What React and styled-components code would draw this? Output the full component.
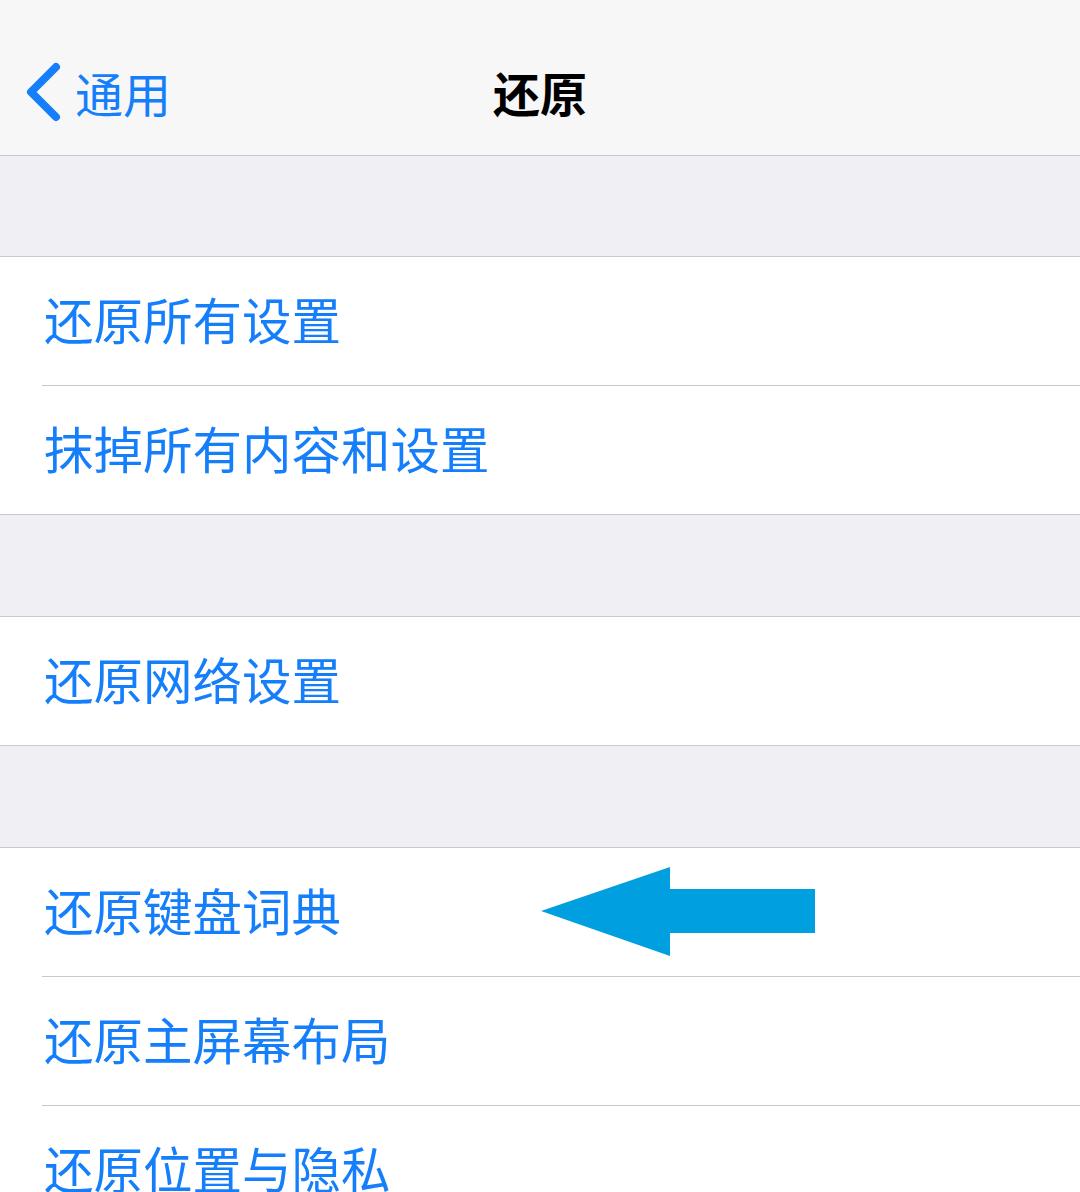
import React from 'react';
import styled, { createGlobalStyle } from 'styled-components';

const GlobalStyle = createGlobalStyle`
  html, body {
    margin: 0;
    padding: 0;
    background: #efeff4;
    font-family: "Noto Sans CJK SC", "Noto Sans", sans-serif;
  }
`;

const Page = styled.div`
  width: 1080px;
  height: 1192px;
  overflow: hidden;
  background: #efeff4;
`;

const NavBar = styled.div`
  box-sizing: border-box;
  height: 156px;
  padding-top: 28px;
  background: #f7f7f8;
  border-bottom: 1px solid #c9c8cd;
  display: grid;
  grid-template-columns: 1fr auto 1fr;
  align-items: center;
`;

const BackButton = styled.div`
  display: flex;
  align-items: center;
  gap: 13px;
  padding-left: 24px;
  color: #157efb;
  font-size: 48px;
  line-height: 1;
`;

const Title = styled.div`
  font-size: 47px;
  font-weight: 600;
  color: #000;
  line-height: 1;
`;

const Group = styled.div`
  margin-top: ${(p) => p.$gap}px;
  background: #fff;
  border-top: 1px solid #c9c8cd;
  border-bottom: 1px solid #c9c8cd;
`;

const Row = styled.div`
  position: relative;
  height: 128px;
  display: flex;
  align-items: center;
  padding-left: 44px;
  color: #157efb;
  font-size: 49.5px;
  line-height: 1;
  & + & {
    border-top: 1px solid transparent;
  }
  & + &::before {
    content: '';
    position: absolute;
    top: -1px;
    left: 42px;
    right: 0;
    height: 1px;
    background: #c9c8cd;
  }
`;

const Label = styled.span`
  display: block;
  padding-bottom: 4px;
`;

const Arrow = styled.svg`
  position: absolute;
  left: 540px;
  top: 19px;
`;

const groups = [
  { gap: 100, items: ['还原所有设置', '抹掉所有内容和设置'] },
  { gap: 101, items: ['还原网络设置'] },
  { gap: 101, items: ['还原键盘词典', '还原主屏幕布局', '还原位置与隐私'] },
];

export default function App() {
  return (
    <Page>
      <GlobalStyle />
      <NavBar>
        <BackButton>
          <svg width="38" height="62" viewBox="0 0 38 62">
            <path d="M32 6 L7 31 L32 56" fill="none" stroke="#157efb" strokeWidth="8" strokeLinecap="round" strokeLinejoin="round" />
          </svg>
          <span>通用</span>
        </BackButton>
        <Title>还原</Title>
        <div />
      </NavBar>
      {groups.map((g, gi) => (
        <Group key={gi} $gap={g.gap}>
          {g.items.map((t) => (
            <Row key={t}>
              <Label>{t}</Label>
              {t === '还原键盘词典' && (
                <Arrow width="276" height="90" viewBox="0 0 276 90">
                  <polygon points="1,44 130,0 130,22 275,22 275,66 130,66 130,89" fill="#00a0e0" />
                </Arrow>
              )}
            </Row>
          ))}
        </Group>
      ))}
    </Page>
  );
}
